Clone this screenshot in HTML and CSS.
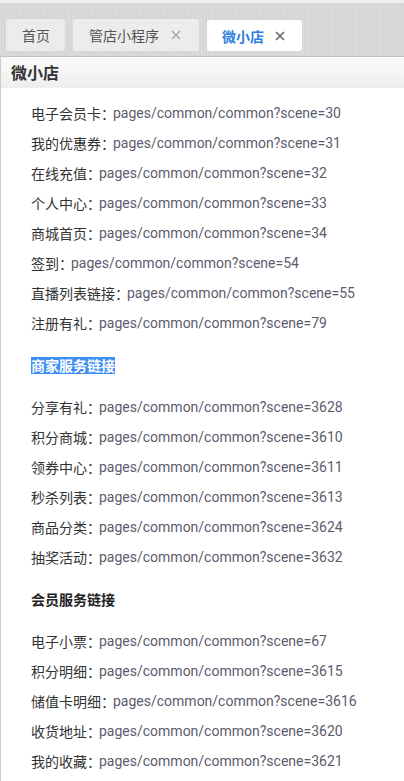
FILE: index.html
```html
<!DOCTYPE html>
<html lang="zh">
<head>
<meta charset="utf-8">
<link rel="stylesheet" href="styles.css">
</head>
<body>
<div class="tabbar">
  <div class="tab">首页</div>
  <div class="tab closable">管店小程序<svg class="close close-light" viewBox="0 0 10 10"><path d="M1 1L9 9M9 1L1 9"/></svg></div>
  <div class="tab active">微小店<svg class="close close-dark" viewBox="0 0 10 10"><path d="M1 1L9 9M9 1L1 9"/></svg></div>
</div>
<div class="panel-title">微小店</div>
<div class="content">
  <div class="row"><span class="label">电子会员卡：</span><span class="value">pages/common/common?scene=30</span></div>
  <div class="row"><span class="label">我的优惠券：</span><span class="value">pages/common/common?scene=31</span></div>
  <div class="row"><span class="label">在线充值：</span><span class="value">pages/common/common?scene=32</span></div>
  <div class="row"><span class="label">个人中心：</span><span class="value">pages/common/common?scene=33</span></div>
  <div class="row"><span class="label">商城首页：</span><span class="value">pages/common/common?scene=34</span></div>
  <div class="row"><span class="label">签到：</span><span class="value">pages/common/common?scene=54</span></div>
  <div class="row"><span class="label">直播列表链接：</span><span class="value">pages/common/common?scene=55</span></div>
  <div class="row"><span class="label">注册有礼：</span><span class="value">pages/common/common?scene=79</span></div>
  <div class="heading"><span class="selected">商家服务链接</span></div>
  <div class="row"><span class="label">分享有礼：</span><span class="value">pages/common/common?scene=3628</span></div>
  <div class="row"><span class="label">积分商城：</span><span class="value">pages/common/common?scene=3610</span></div>
  <div class="row"><span class="label">领券中心：</span><span class="value">pages/common/common?scene=3611</span></div>
  <div class="row"><span class="label">秒杀列表：</span><span class="value">pages/common/common?scene=3613</span></div>
  <div class="row"><span class="label">商品分类：</span><span class="value">pages/common/common?scene=3624</span></div>
  <div class="row"><span class="label">抽奖活动：</span><span class="value">pages/common/common?scene=3632</span></div>
  <div class="heading"><span class="plain">会员服务链接</span></div>
  <div class="row"><span class="label">电子小票：</span><span class="value">pages/common/common?scene=67</span></div>
  <div class="row"><span class="label">积分明细：</span><span class="value">pages/common/common?scene=3615</span></div>
  <div class="row"><span class="label">储值卡明细：</span><span class="value">pages/common/common?scene=3616</span></div>
  <div class="row"><span class="label">收货地址：</span><span class="value">pages/common/common?scene=3620</span></div>
  <div class="row"><span class="label">我的收藏：</span><span class="value">pages/common/common?scene=3621</span></div>
</div>
</body>
</html>
```
FILE: styles.css
```css
html, body {
  margin: 0;
  padding: 0;
  background: #ffffff;
}
body {
  font-family: "Noto Sans CJK SC", "Noto Sans", sans-serif;
  color: #333333;
  overflow: hidden;
}
.tabbar {
  height: 37px;
  padding: 16px 0 0 6px;
  border-top: 3px solid #eeeeee;
  border-bottom: 1px solid #c3c3c3;
  background-color: #dadada;
  background-image: repeating-linear-gradient(90deg, rgba(255,255,255,0.08) 0 1px, rgba(0,0,0,0.02) 1px 3px);
  display: flex;
  align-items: flex-start;
  gap: 8px;
}
.tab {
  height: 32px;
  box-sizing: border-box;
  padding: 0 15px 0 16px;
  background: #ececec;
  border-radius: 3px;
  font-size: 14px;
  line-height: 32px;
  color: #555555;
  display: flex;
  align-items: center;
  white-space: nowrap;
}
.tab.closable {
  padding-right: 18px;
}
.tab.active {
  margin-top: 1px;
  height: 31px;
  background: #ffffff;
  color: #2f7fe2;
  font-weight: 600;
  padding: 0 17px 0 15px;
}
.close {
  width: 10px;
  height: 10px;
  margin-left: 12px;
  fill: none;
  stroke-width: 1.6;
}
.close-light { stroke: #aaaaaa; }
.close-dark { stroke: #666666; margin-left: 11px; }
.panel-title {
  height: 31px;
  line-height: 31px;
  padding-left: 10px;
  border-left: 1px solid #cccccc;
  background: linear-gradient(#fbfbfb, #eeeeee);
  font-size: 16px;
  font-weight: 700;
  color: #333333;
}
.content {
  border-left: 1px solid #cccccc;
  padding: 10px 0 20px 30px;
}
.row {
  height: 30px;
  line-height: 30px;
  display: flex;
  align-items: center;
  white-space: nowrap;
}
.label {
  font-size: 14px;
  color: #333333;
  margin-right: -2px;
}
.value {
  font-family: Roboto, "Noto Sans", sans-serif;
  font-size: 14px;
  color: #5d5b6d;
}
.heading {
  margin: 17px 0;
  height: 20px;
  display: flex;
  align-items: center;
  font-size: 14px;
  font-weight: 700;
}
.selected {
  line-height: 17px;
  background: #3d8ef5;
  color: #ffffff;
}
.plain {
  line-height: 17px;
  color: #222222;
}
```
